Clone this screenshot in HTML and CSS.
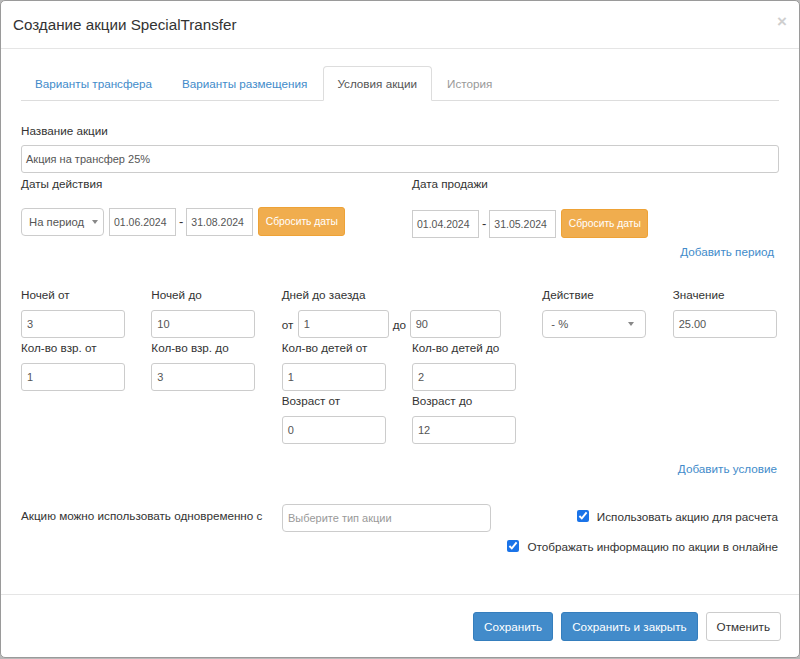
FILE: index.html
```html
<!DOCTYPE html>
<html lang="ru">
<head>
<meta charset="utf-8">
<title>Создание акции SpecialTransfer</title>
<link rel="stylesheet" href="styles.css">
</head>
<body>
<div class="modal">
  <div class="modal-header">
    <h4 class="modal-title">Создание акции SpecialTransfer</h4>
    <span class="close">×</span>
  </div>
  <div class="modal-body">
    <ul class="nav-tabs">
      <li><a class="tab">Варианты трансфера</a></li>
      <li><a class="tab">Варианты размещения</a></li>
      <li><a class="tab active">Условия акции</a></li>
      <li><a class="tab disabled">История</a></li>
    </ul>

    <div class="tab-content">
      <label class="lbl">Название акции</label>
      <div class="input input-full">Акция на трансфер 25%</div>

      <div class="dates">
        <div class="date-group">
          <label class="lbl">Даты действия</label>
          <div class="date-row">
            <div class="select select-period"><span>На период</span><i class="caret"></i></div>
            <div class="date">01.06.2024</div>
            <span class="dash">-</span>
            <div class="date">31.08.2024</div>
            <button class="btn btn-warning">Сбросить даты</button>
          </div>
        </div>
        <div class="date-group">
          <label class="lbl">Дата продажи</label>
          <div class="date-row date-row-sale">
            <div class="date">01.04.2024</div>
            <span class="dash">-</span>
            <div class="date">31.05.2024</div>
            <button class="btn btn-warning">Сбросить даты</button>
          </div>
        </div>
      </div>

      <div class="link-row link-period"><a class="link">Добавить период</a></div>

      <div class="fields">
        <div class="field"><label class="lbl">Ночей от</label><div class="input">3</div></div>
        <div class="field"><label class="lbl">Ночей до</label><div class="input">10</div></div>
        <div class="field span2">
          <label class="lbl">Дней до заезда</label>
          <div class="range">
            <span class="range-word">от</span><div class="input input-range">1</div>
            <span class="range-word range-word-to">до</span><div class="input input-range">90</div>
          </div>
        </div>
        <div class="field"><label class="lbl">Действие</label><div class="select select-action"><span>- %</span><i class="caret"></i></div></div>
        <div class="field"><label class="lbl">Значение</label><div class="input">25.00</div></div>

        <div class="field"><label class="lbl">Кол-во взр. от</label><div class="input">1</div></div>
        <div class="field"><label class="lbl">Кол-во взр. до</label><div class="input">3</div></div>
        <div class="field"><label class="lbl">Кол-во детей от</label><div class="input">1</div></div>
        <div class="field"><label class="lbl">Кол-во детей до</label><div class="input">2</div></div>
        <div class="field empty"></div>
        <div class="field empty"></div>

        <div class="field col3"><label class="lbl">Возраст от</label><div class="input">0</div></div>
        <div class="field"><label class="lbl">Возраст до</label><div class="input">12</div></div>
      </div>

      <div class="link-row link-cond"><a class="link">Добавить условие</a></div>

      <div class="combo">
        <div class="combo-left">
          <span class="combo-label">Акцию можно использовать одновременно с</span>
          <div class="input input-combo placeholder">Выберите тип акции</div>
        </div>
        <div class="checks">
          <label class="check"><input type="checkbox" checked><span>Использовать акцию для расчета</span></label>
          <label class="check"><input type="checkbox" checked><span>Отображать информацию по акции в онлайне</span></label>
        </div>
      </div>
    </div>
  </div>
  <div class="modal-footer">
    <button class="btn btn-primary">Сохранить</button>
    <button class="btn btn-primary">Сохранить и закрыть</button>
    <button class="btn btn-default">Отменить</button>
  </div>
</div>
</body>
</html>
```

FILE: styles.css
```css
* { box-sizing: border-box; }
html, body { margin: 0; padding: 0; }
body {
  background: #b9b9b9;
  font-family: "Liberation Sans", Arial, sans-serif;
  font-size: 11.7px;
  color: #333;
}
.modal {
  width: 800px;
  height: 658px;
  background: #fff;
  border: 1px solid #9a9a9a;
  border-radius: 5px;
  display: flex;
  flex-direction: column;
}
.modal-header {
  display: flex;
  justify-content: space-between;
  align-items: center;
  padding: 14px 13px 14px 12px;
  border-bottom: 1px solid #e5e5e5;
  height: 48px;
}
.modal-title {
  margin: 0;
  font-size: 15.2px;
  font-weight: normal;
  line-height: 19px;
  color: #333;
}
.close {
  font-size: 17px;
  font-weight: bold;
  color: #cfcfcf;
  line-height: 1;
  margin-top: -6px;
  margin-right: -1px;
}
.modal-body {
  flex: 1;
  padding: 17px 20px 0 20px;
}
.nav-tabs {
  list-style: none;
  margin: 0;
  padding: 0;
  display: flex;
  border-bottom: 1px solid #ddd;
}
.tab {
  display: block;
  padding: 8px 14px 8px 13px;
  line-height: 17px;
  margin-right: 1px;
  margin-bottom: -1px;
  border: 1px solid transparent;
  border-radius: 4px 4px 0 0;
  color: #428bca;
}
.tab.active {
  color: #555;
  background: #fff;
  border-color: #ddd #ddd transparent;
}
.tab.disabled { color: #999; padding-left: 13px; }

.tab-content { padding-top: 21px; }
.lbl {
  display: block;
  line-height: 18px;
  margin-bottom: 5px;
  color: #333;
}
.input {
  height: 28px;
  border: 1px solid #ccc;
  border-radius: 3px;
  padding: 0 5px;
  line-height: 26px;
  color: #555;
  font-size: 11px;
  width: 104px;
  background: #fff;
  white-space: nowrap;
}
.input-full { width: 100%; padding-left: 4px; }
.placeholder { color: #999; }

.dates {
  display: grid;
  grid-template-columns: 1fr 1fr;
  column-gap: 24px;
  margin-top: 2px;
}
.date-row {
  display: flex;
  align-items: center;
  margin-top: 14px;
}
.date-row-sale { margin-top: 16px; }
.select {
  height: 28px;
  border: 1px solid #ccc;
  border-radius: 4px;
  display: flex;
  align-items: center;
  justify-content: space-between;
  padding: 0 5px 0 7px;
  color: #555;
  font-size: 11.3px;
  background: #fff;
}
.select-period { width: 83px; margin-right: 5px; }
.select-action { width: 104px; padding-left: 8px; padding-right: 11px; }
.caret {
  width: 0; height: 0;
  border-left: 3px solid transparent;
  border-right: 3px solid transparent;
  border-top: 4px solid #888;
}
.date {
  width: 67px;
  height: 28px;
  border: 1px solid #ccc;
  padding: 0 4px;
  line-height: 26px;
  color: #555;
  font-size: 10.5px;
  white-space: nowrap;
}
.dash { margin: 0 3px; color: #333; font-size: 13px; }
.btn {
  font-family: inherit;
  border: 1px solid transparent;
  border-radius: 3px;
  cursor: pointer;
}
.btn-warning {
  margin-left: 5px;
  height: 29px;
  width: 87px;
  padding: 0;
  background: #f0ad4e;
  border-color: #eea236;
  color: #fff;
  font-size: 10.3px;
}
.link-row { display: flex; justify-content: flex-end; }
.link { color: #428bca; line-height: 18px; }
.link-period { margin-top: 5px; padding-right: 5px; }
.link-cond { margin-top: 16px; padding-right: 2px; }

.fields {
  display: grid;
  grid-template-columns: repeat(6, 1fr);
  column-gap: 24px;
  row-gap: 1px;
  margin-top: 25px;
}
.field .lbl { margin-bottom: 6px; }
.span2 { grid-column: span 2; }
.col3 { grid-column: 3; }
.range { display: flex; align-items: center; }
.range-word { width: 16px; color: #333; }
.range-word-to { width: 17px; margin-left: 4px; }
.input-range { width: 91px; }

.combo {
  display: flex;
  justify-content: space-between;
  margin-top: 26px;
}
.combo-left { display: flex; align-items: flex-start; }
.combo-label { width: 261px; line-height: 18px; margin-top: 3px; }
.input-combo { width: 209px; border-radius: 4px; padding-left: 5px; }
.checks {
  display: flex;
  flex-direction: column;
  align-items: flex-end;
  padding-right: 1px;
}
.check {
  display: flex;
  align-items: center;
  height: 18px;
  margin-top: 3px;
  margin-bottom: 9px;
}
.check input {
  margin: 0 8px 0 0;
  width: 12px;
  height: 12px;
  accent-color: #1a73e8;
}
.modal-footer {
  border-top: 1px solid #e5e5e5;
  padding: 17px 18px 16px;
  display: flex;
  justify-content: flex-end;
  gap: 8px;
}
.btn-primary, .btn-default {
  height: 29px;
  padding: 0 10px;
  font-size: 11.7px;
  line-height: 27px;
}
.btn-primary {
  background: #428bca;
  border-color: #357ebd;
  color: #fff;
}
.btn-default {
  background: #fff;
  border-color: #ccc;
  color: #333;
}
```
